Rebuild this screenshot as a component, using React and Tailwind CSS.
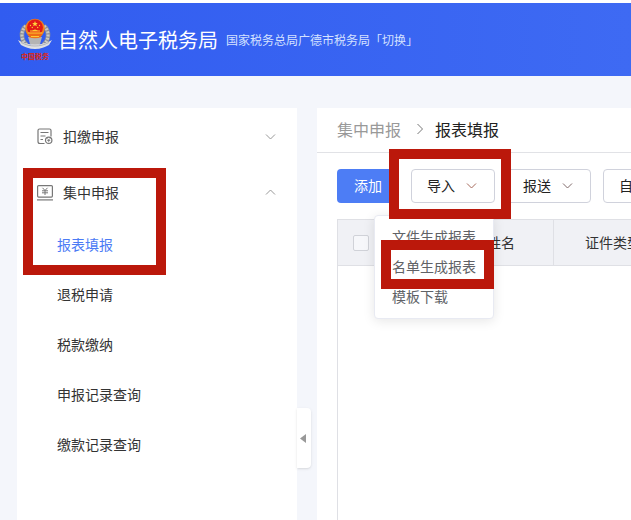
import React from "react";

const subItems = ["报表填报", "退税申请", "税款缴纳", "申报记录查询", "缴款记录查询"];
const importItems = ["文件生成报表", "名单生成报表", "模板下载"];

function Chevron({ className, d = "M1 3.5 5.5 8 10 3.5" }) {
  return (
    <svg className={className} width="11" height="11" viewBox="0 0 11 11" fill="none" stroke="currentColor" aria-hidden="true">
      <path d={d} />
    </svg>
  );
}

function Emblem() {
  return (
    <svg width="34" height="44" viewBox="0 0 34 44" className="shrink-0" role="img" aria-label="中国税务">
      <path d="M8 8C2 13 3 23 9 27M26 8c6 5 5 15-1 19" fill="none" stroke="#8e8f95" strokeWidth="4.5" />
      <path d="M8 8C2 13 3 23 9 27M26 8c6 5 5 15-1 19" fill="none" stroke="#c9c9c4" strokeWidth="3" strokeDasharray="2 1.2" />
      <path d="M10 19h14l-2 7-5 3-5-3z" fill="#b4b4b4" />
      <path d="M0 22c5 3 10 4.500 17 4.500S29 25 34 22l-3 5c-4 2-8 4-14 4S7 29 3 27z" fill="#dedfe2" />
      <path d="M3 24.500c5 2.500 9 3.500 14 3.500s9-1 14-3.500" fill="none" stroke="#9da0a8" strokeWidth=".7" />
      <circle cx="17" cy="10.500" r="9.800" fill="#f0821c" />
      <circle cx="17" cy="9.500" r="8" fill="#e21a17" />
      <path d="m17 3 .8 1.900 2 .1-1.500 1.300.5 2L17 7.200l-1.800 1.100.5-2L14.200 5l2-.1z" fill="#ffd23c" />
      <g fill="#ffc933">
        <circle cx="12.500" cy="7.500" r=".7" />
        <circle cx="21.500" cy="7.500" r=".7" />
        <circle cx="14.300" cy="9.500" r=".7" />
        <circle cx="19.700" cy="9.500" r=".7" />
        <path d="M12 13.500h10v-1h-2l-3-1-3 1h-2z" />
      </g>
      <path d="M9 14.500h16l-2.500 5h-11z" fill="#ee6a16" />
      <path d="M9.500 15h15M13 18.500h8" stroke="#ffc933" strokeWidth="1.200" />
      <text x="17" y="41" textAnchor="middle" fontSize="7" fontWeight="900" fill="#cf2a2a">中国税务</text>
    </svg>
  );
}

function WithholdIcon() {
  return (
    <svg width="16" height="18" viewBox="0 0 16 18" fill="none" stroke="#777" strokeWidth="1.200" className="shrink-0" aria-hidden="true">
      <path d="M7.500 16.500H3C1.500 16.500 1 15.800 1 14.500V3.500c0-1 .6-1.500 1.500-1.500h10c1 0 1.500.5 1.500 1.500v6" />
      <path d="M3.500 5.500h8M3.500 9h5M3.500 12.500h2.500" />
      <circle cx="11.700" cy="13.300" r="3.200" />
      <path d="m10.200 11.300 1.500 1.700 1.500-1.700M11.700 13v2.300M10.200 13.500h3" strokeWidth=".8" />
    </svg>
  );
}

function YuanIcon() {
  return (
    <svg width="16" height="18" viewBox="0 0 16 18" fill="none" stroke="#777" strokeWidth="1.200" className="shrink-0" aria-hidden="true">
      <rect x=".6" y="2.600" width="14.800" height="11.500" rx="1" />
      <path d="M0 16.900h16" />
      <path d="M5.500 4.800 8 7.500l2.500-2.700M8 7.500V12M5 7.800h6M5 9.800h6" strokeWidth="1" />
    </svg>
  );
}

function Highlight({ className }) {
  return <div aria-hidden="true" className={`pointer-events-none absolute z-20 border-10 border-[#bb180b] ${className}`} />;
}

function DropButton({ label, open }) {
  return (
    <button
      type="button"
      aria-expanded={open}
      className="flex h-[34px] w-21 shrink-0 items-center gap-[11px] rounded border border-[#d0d2dc] bg-white pb-[2px] pl-[15px] text-[#222]"
    >
      {label}
      <Chevron className={open ? "text-[#a66a5c]" : "text-[#806a6a]"} />
    </button>
  );
}

export default function App() {
  return (
    <div className="relative flex min-h-screen flex-col overflow-hidden bg-[#f4f6fb] font-['Noto_Sans_CJK_SC',sans-serif] text-sm text-[#333]">
      <header className="flex h-[76px] items-center border-t-3 border-white bg-linear-to-r from-[#315cf0] to-[#3e6af3] bg-clip-padding pl-[18px]">
        <Emblem />
        <h1 className="ml-[6px] text-xl text-white">自然人电子税务局</h1>
        <p className="ml-2 text-xs text-[#d4e1ff]">
          国家税务总局广德市税务局<a href="#switch">「切换」</a>
        </p>
      </header>

      <div className="flex flex-1 gap-5 pt-8 pl-[17px]">
        <aside className="relative w-[280px] shrink-0 bg-white">
          <nav>
            <button type="button" className="flex h-14 w-full items-center gap-[10px] pr-[21px] pl-5">
              <WithholdIcon />
              <span className="flex-1 text-left">扣缴申报</span>
              <Chevron className="text-[#999]" />
            </button>
            <button type="button" aria-expanded="true" className="flex h-14 w-full items-center gap-[10px] pr-[21px] pl-5">
              <YuanIcon />
              <span className="flex-1 text-left">集中申报</span>
              <Chevron className="text-[#999]" d="M1 7.500 5.500 3 10 7.500" />
            </button>
            <ul>
              {subItems.map((item, i) => (
                <li key={item}>
                  <a href="#menu" className={`flex h-[50px] items-center pb-[2px] pl-10 ${i === 0 ? "text-[#4b7bf5]" : ""}`}>
                    {item}
                  </a>
                </li>
              ))}
            </ul>
          </nav>
          <button
            type="button"
            aria-label="收起菜单"
            className="absolute top-[300px] left-full flex h-15 w-[14px] items-center rounded-r bg-white pl-[3px] shadow-sm"
          >
            <svg width="6" height="9" viewBox="0 0 6 9" fill="#999" aria-hidden="true">
              <path d="M6 0v9L0 4.500z" />
            </svg>
          </button>
        </aside>

        <main className="min-w-0 flex-1 bg-white">
          <div className="flex h-[45px] items-center border-b border-[#e1e2e6] pb-[2px] pl-5 text-base">
            <a href="#declare" className="text-[#999]">集中申报</a>
            <svg width="8" height="12" viewBox="0 0 8 12" fill="none" stroke="#777" className="mr-[11px] ml-[15px]" aria-hidden="true">
              <path d="M1.500 1 6.500 6l-5 5" />
            </svg>
            <span className="text-[#222]">报表填报</span>
          </div>

          <div className="flex flex-col gap-4 overflow-hidden pt-4 pl-5">
            <div className="flex gap-3">
              <button type="button" className="h-[34px] w-[62px] shrink-0 rounded bg-[#4d7df5] pb-[2px] text-white">添加</button>
              <DropButton label="导入" open />
              <DropButton label="报送" />
              <button type="button" className="h-[34px] shrink-0 rounded border border-[#d0d2dc] px-[15px] pb-[2px] whitespace-nowrap text-[#222]">
                自定义
              </button>
            </div>
            <div className="min-h-[302px] w-[600px] border-l border-[#dfe0e5]">
              <table className="w-full table-fixed border-collapse">
                <thead>
                  <tr className="h-[46px] border-y border-[#dfe0e5] bg-[#f0f1f5]">
                    <th className="w-[47px] text-center">
                      <input
                        type="checkbox"
                        aria-label="全选"
                        className="ml-[15px] block size-4 appearance-none rounded-xs border border-[#d0d2d8] bg-[#f6f7fa]"
                      />
                    </th>
                    <th className="w-16 border-l border-[#dfe0e5]" />
                    <th className="w-26 border-x border-[#dfe0e5] pb-[2px] font-normal">姓名</th>
                    <th className="w-30 border-r border-[#dfe0e5] pb-[2px] font-normal">证件类型</th>
                    <th />
                  </tr>
                </thead>
              </table>
            </div>
          </div>
        </main>
      </div>

      <ul className="absolute top-[215px] left-[374px] z-10 w-30 rounded border border-[#e8eaf2] bg-white pt-[5px] pb-[7px] text-[#606266] shadow-[0_2px_12px_rgba(0,0,0,0.1)]">
        {importItems.map((item) => (
          <li key={item}>
            <button type="button" className="block h-[30px] w-full pl-[17px] text-left">{item}</button>
          </li>
        ))}
      </ul>

      <Highlight className="top-[168px] left-[23px] h-[107px] w-[143px]" />
      <Highlight className="top-[149px] left-[389px] h-[70px] w-[122px]" />
      <Highlight className="top-[240px] left-[381px] h-[49px] w-[113px]" />
    </div>
  );
}
